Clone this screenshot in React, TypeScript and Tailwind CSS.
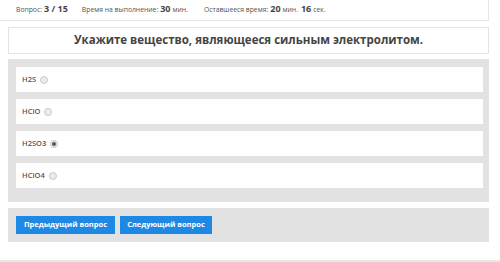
import React from "react";

const font = { fontFamily: '"Open Sans", "Noto Sans", sans-serif' };

function Radio({ checked }: { checked?: boolean }) {
  return (
    <span className="inline-flex h-[8px] w-[8px] items-center justify-center rounded-full border border-[#c8c8c8] bg-[#ececec]">
      {checked && <span className="h-[4px] w-[4px] rounded-full bg-[#555]" />}
    </span>
  );
}

function Option({ label, checked }: { label: string; checked?: boolean }) {
  return (
    <div className="flex h-[25px] items-center gap-[4px] bg-white pl-[6px]">
      <span className="text-[7.5px] font-semibold text-[#555]">{label}</span>
      <Radio checked={checked} />
    </div>
  );
}

export default function App() {
  return (
    <div className="relative h-[262px] w-[500px] overflow-hidden bg-white" style={font}>
      <div className="flex h-[21px] w-[489px] items-baseline border-b border-r border-[#e6e6e6] pl-[16px] pt-[2px] leading-[14px] text-[#555]">
        <span className="text-[6.8px]">Вопрос:</span>
        <span className="ml-[2px] text-[9px] font-bold text-[#444]">3 / 15</span>
        <span className="ml-[14px] text-[6.8px]">Время на выполнение:</span>
        <span className="ml-[2px] text-[9px] font-bold text-[#444]">30</span>
        <span className="ml-[2px] text-[6.8px]">мин.</span>
        <span className="ml-[16px] text-[6.8px]">Оставшееся время:</span>
        <span className="ml-[2px] text-[9px] font-bold text-[#444]">20</span>
        <span className="ml-[2px] text-[6.8px]">мин.</span>
        <span className="ml-[3px] text-[9px] font-bold text-[#444]">16</span>
        <span className="ml-[2px] text-[6.8px]">сек.</span>
      </div>
      <div className="ml-[8px] mt-[6px] flex h-[27px] w-[481px] items-center justify-center border border-[#e3e3e3] bg-white pb-[2px]">
        <span className="text-[11.5px] font-bold text-[#444]">Укажите вещество, являющееся сильным электролитом.</span>
      </div>
      <div className="ml-[8px] mt-[5px] flex w-[481px] flex-col gap-[7px] bg-[#e2e2e2] pb-[14px] pl-[8px] pr-[6px] pt-[8px]">
        <Option label="H2S" />
        <Option label="HClO" />
        <Option label="H2SO3" checked />
        <Option label="HClO4" />
      </div>
      <div className="ml-[8px] mt-[6px] flex h-[34px] w-[481px] items-start gap-[5px] bg-[#e2e2e2] pl-[8px] pt-[8px]">
        <button className="flex h-[18px] w-[99px] items-center justify-center bg-[#1e88e5] text-[7.5px] font-bold text-white">
          Предыдущий вопрос
        </button>
        <button className="flex h-[18px] w-[92px] items-center justify-center bg-[#1e88e5] text-[7.5px] font-bold text-white">
          Следующий вопрос
        </button>
      </div>
      <div className="absolute bottom-0 left-0 h-[2px] w-[500px] bg-[#e8e8e8]" />
    </div>
  );
}
